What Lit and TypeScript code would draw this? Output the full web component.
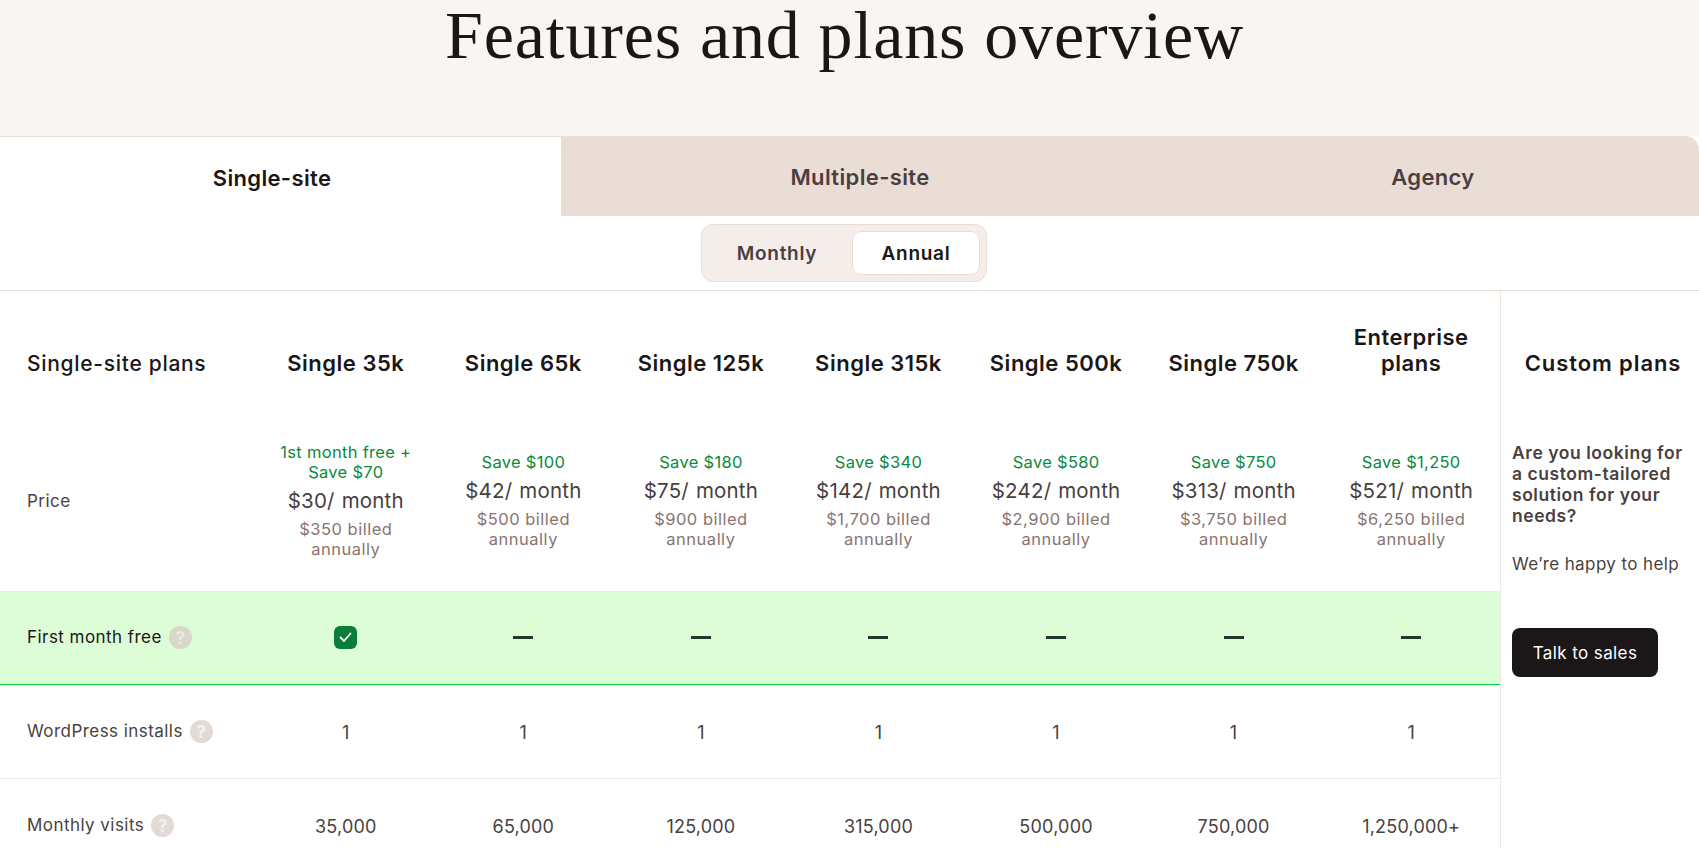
import { LitElement, html, css } from "lit";
import { customElement } from "lit/decorators.js";

const plans = [
  { name: "Single 35k", save: "1st month free + Save $70", price: "$30", billed: "$350 billed annually", visits: "35,000" },
  { name: "Single 65k", save: "Save $100", price: "$42", billed: "$500 billed annually", visits: "65,000" },
  { name: "Single 125k", save: "Save $180", price: "$75", billed: "$900 billed annually", visits: "125,000" },
  { name: "Single 315k", save: "Save $340", price: "$142", billed: "$1,700 billed annually", visits: "315,000" },
  { name: "Single 500k", save: "Save $580", price: "$242", billed: "$2,900 billed annually", visits: "500,000" },
  { name: "Single 750k", save: "Save $750", price: "$313", billed: "$3,750 billed annually", visits: "750,000" },
  { name: "Enterprise plans", save: "Save $1,250", price: "$521", billed: "$6,250 billed annually", visits: "1,250,000+" },
];

@customElement("app-root")
export class AppRoot extends LitElement {
  static styles = css`
    :host { display: block; height: 848px; overflow: hidden; background: #fff; color: #1b1718; font-family: Inter, "Liberation Sans", sans-serif; font-size: 17px; }
    * { box-sizing: border-box; }
    .hero { height: 136px; background: #f9f5f2; text-align: center; padding-right: 10px; }
    h1 { margin: 0; font-family: "Liberation Serif", serif; font-weight: 400; font-size: 68px; line-height: 70px; letter-spacing: 0.85px; color: #1b1718; }
    .tabs { display: grid; grid-template-columns: 561px 598px 540px; height: 80px; background: #eaddd5; border-top-right-radius: 14px; overflow: hidden; }
    .tab { display: flex; align-items: center; justify-content: center; padding-top: 2px; font-size: 22px; font-weight: 600; letter-spacing: 0.35px; color: #4a3f40; }
    .tab.active { background: #fff; color: #1b1718; border-top: 1px solid #eaddd5; padding-right: 17px; }
    .tab.last { padding-left: 8px; }
    .toggle-bar { display: flex; height: 75px; border-bottom: 1px solid #eaddd5; padding: 8px 0 0 701px; }
    .toggle { display: flex; width: 286px; height: 58px; padding: 6px 6px 6px 0; background: #f5edea; border: 1px solid #eaddd5; border-radius: 12px; }
    .opt { display: flex; align-items: center; justify-content: center; font-size: 19px; font-weight: 600; letter-spacing: 0.7px; color: #4a3f40; flex: 1; }
    .opt.on { flex: 0 0 128px; background: #fff; color: #1b1718; border: 1px solid #eaddd5; border-radius: 9px; }
    .body { display: flex; }
    .table { width: 1500px; flex: none; }
    .row { display: grid; grid-template-columns: 257px repeat(7, 1fr); align-items: center; }
    .head { height: 118px; align-items: end; padding-bottom: 33px; }
    .label { padding-left: 27px; display: flex; align-items: center; gap: 7px; color: #4a3f40; letter-spacing: 0.45px; }
    .txt { padding-bottom: 2px; }
    .head .label { font-size: 21px; font-weight: 500; color: #1b1718; line-height: 26px; letter-spacing: 0.7px; margin-bottom: -1px; }
    .name { font-size: 22px; font-weight: 600; line-height: 26px; letter-spacing: 0.5px; text-align: center; padding: 0 10px; }
    .price-row { height: 182px; }
    .price-row .label { padding-top: 2px; }
    .pcell { text-align: center; padding: 0 18px; display: flex; flex-direction: column; gap: 5px; }
    .save { font-size: 16.5px; line-height: 20px; letter-spacing: 0.3px; color: #0a8a3c; }
    .price { font-size: 20.5px; line-height: 26px; letter-spacing: 0.2px; word-spacing: 1px; color: #4a3f40; margin-top: 1px; }
    .billed { font-size: 16.5px; line-height: 20px; letter-spacing: 0.5px; color: #8a7470; }
    .free { height: 94px; padding-bottom: 1px; background: #ddfdd6; border-top: 1px solid #f0e8e4; border-bottom: 1px solid #00d33c; }
    .free .label { color: #1b1718; }
    .line { height: 94px; border-bottom: 1px solid #f0e8e4; }
    .val { text-align: center; color: #4a3f40; font-size: 18px; letter-spacing: 0.2px; padding-top: 2px; }
    .center { display: flex; justify-content: center; }
    .help { width: 23px; height: 23px; border-radius: 50%; background: #e3dad6; color: #f7f2f0; display: flex; align-items: center; justify-content: center; font-size: 17px; font-weight: 700; letter-spacing: 0; }
    .free .help { background: #d8d7c9; color: #ecebdd; }
    .check { width: 23px; height: 23px; border-radius: 6px; background: #0a7d36; display: flex; align-items: center; justify-content: center; }
    .dash { width: 20px; height: 3px; background: #203a2a; }
    aside { flex: 1; border-left: 1px solid #f0e8e4; padding: 0 0 0 11px; }
    aside h2 { margin: 59px 0 0 -11px; font-size: 22px; line-height: 26px; font-weight: 600; letter-spacing: 0.9px; color: #1b1718; text-align: center; padding-left: 6px; }
    .q { margin: 66px 0 0; padding-right: 14px; font-size: 17.5px; line-height: 21px; font-weight: 600; letter-spacing: 0.55px; color: #4a3f40; }
    .a { margin: 28px 0 0; font-size: 17px; line-height: 21px; letter-spacing: 0.4px; color: #4a3f40; }
    button { display: block; margin-top: 53px; width: 146px; height: 49px; border: none; border-radius: 8px; background: #1b1718; color: #fff; font: 400 17px Inter, "Liberation Sans", sans-serif; letter-spacing: 0.4px; }
  `;

  render() {
    const help = html`<span class="help">?</span>`;
    return html`
      <div class="hero"><h1>Features and plans overview</h1></div>
      <div class="tabs">
        <div class="tab active">Single-site</div>
        <div class="tab">Multiple-site</div>
        <div class="tab last">Agency</div>
      </div>
      <div class="toggle-bar">
        <div class="toggle"><div class="opt">Monthly</div><div class="opt on">Annual</div></div>
      </div>
      <div class="body">
        <div class="table">
          <div class="row head">
            <div class="label">Single-site plans</div>
            ${plans.map((p) => html`<div class="name">${p.name}</div>`)}
          </div>
          <div class="row price-row">
            <div class="label">Price</div>
            ${plans.map((p) => html`<div class="pcell">
              <div class="save">${p.save}</div>
              <div class="price">${p.price}/ month</div>
              <div class="billed">${p.billed}</div>
            </div>`)}
          </div>
          <div class="row free">
            <div class="label"><span class="txt">First month free</span> ${help}</div>
            ${plans.map((_, i) => html`<div class="center">${i === 0
              ? html`<span class="check"><svg width="13" height="11" viewBox="0 0 13 11" fill="none"><path d="M1.5 5.5 5 9l6.5-7.5" stroke="#fff" stroke-width="1.8" stroke-linecap="round" stroke-linejoin="round"/></svg></span>`
              : html`<span class="dash"></span>`}</div>`)}
          </div>
          <div class="row line">
            <div class="label"><span class="txt">WordPress installs</span> ${help}</div>
            ${plans.map(() => html`<div class="val">1</div>`)}
          </div>
          <div class="row line">
            <div class="label"><span class="txt">Monthly visits</span> ${help}</div>
            ${plans.map((p) => html`<div class="val">${p.visits}</div>`)}
          </div>
        </div>
        <aside>
          <h2>Custom plans</h2>
          <p class="q">Are you looking for a custom-tailored solution for your needs?</p>
          <p class="a">We’re happy to help</p>
          <button>Talk to sales</button>
        </aside>
      </div>
    `;
  }
}
